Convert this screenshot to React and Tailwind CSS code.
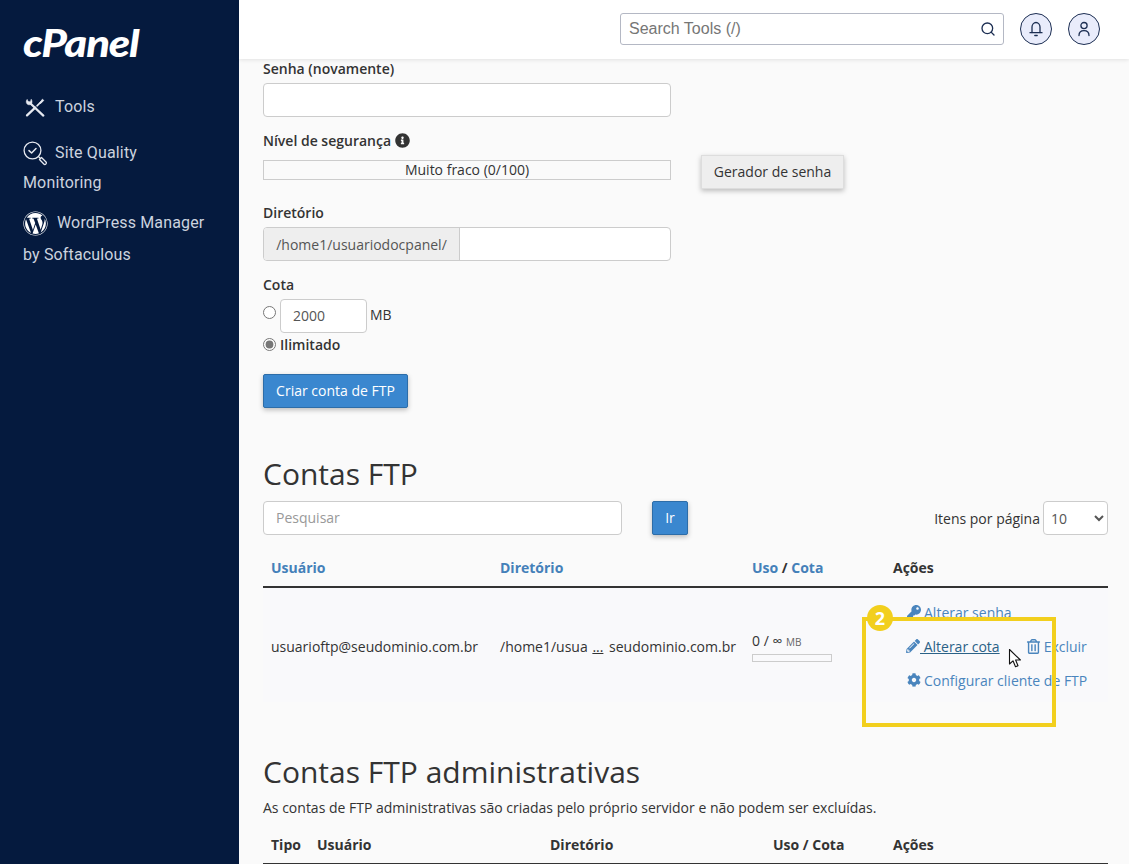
import React from 'react';
import { Search } from 'lucide-react';
import { FaKey, FaPencilAlt, FaRegTrashAlt, FaCog, FaInfoCircle, FaWordpress } from 'react-icons/fa';

function ToolsIcon() {
  return (
    <svg width="20" height="19" viewBox="0 0 20 19" fill="none" stroke="#e6e9f0" strokeLinecap="round" strokeLinejoin="round">
      <path d="M6 6 L18.3 17.6" strokeWidth="2.2" />
      <path d="M2 1.6 C0.7 3 1 5.4 2.6 6.4 C4 7.2 5.8 6.8 6.6 5.6 C7.3 4.4 7.2 2.6 6.2 1.2 L5.4 3.8 L3.4 3.6 Z" fill="#e6e9f0" strokeWidth="0.5" />
      <path d="M2 17.4 L10.2 9.6" strokeWidth="2.2" />
      <path d="M12 7.8 L15.8 4.2" strokeWidth="1.6" />
      <path d="M15 4.6 L17.4 1.2 L18.8 2.4 L15.8 5.4 Z" fill="#e6e9f0" strokeWidth="0.8" />
    </svg>
  );
}

function QualityIcon() {
  return (
    <svg width="24" height="25" viewBox="0 0 24 25" fill="none" stroke="#e6e9f0" strokeWidth="1.3" strokeLinecap="round" strokeLinejoin="round">
      <circle cx="9.5" cy="9.5" r="8.4" />
      <path d="M6 9.6 L8.6 12 L13 7.5" strokeWidth="1.5" />
      <path d="M15.6 15.6 L17 17" />
      <path d="M16.5 18.5 L18.5 16.5 L23 21 C23.6 21.8 23.4 22.5 22.8 23.1 C22.2 23.7 21.4 23.7 20.8 23 Z" />
    </svg>
  );
}

function BellIcon() {
  return (
    <svg width="14" height="16" viewBox="0 0 14 16" fill="none" stroke="#1c2e52" strokeWidth="1.3" strokeLinecap="round" strokeLinejoin="round">
      <path d="M3 11.5 V6 C3 3.5 4.8 1.5 7 1.5 C9.2 1.5 11 3.5 11 6 V11.5" />
      <path d="M1 11.7 H13" />
      <path d="M5.8 14.5 H8.2" />
    </svg>
  );
}

function UserIcon() {
  return (
    <svg width="14" height="16" viewBox="0 0 14 16" fill="none" stroke="#1c2e52" strokeWidth="1.3" strokeLinecap="round" strokeLinejoin="round">
      <circle cx="7" cy="4.6" r="3.1" />
      <path d="M2 14.5 C2 11.2 4 9.6 7 9.6 C10 9.6 12 11.2 12 14.5" />
    </svg>
  );
}

function Cursor() {
  return (
    <svg className="absolute left-[1008px] top-[648px]" width="14" height="21" viewBox="0 0 14 21">
      <path d="M1.5 1.5 L1.5 16 L5 12.8 L7.5 18.8 L10 17.7 L7.6 12 L12.4 12 Z" fill="#fff" stroke="#111" strokeWidth="1.1" strokeLinejoin="round" />
    </svg>
  );
}

function Sidebar() {
  return (
    <aside className="w-[239px] shrink-0 bg-[#051a3e] pl-[23px] pr-3 pt-[25px] font-['Roboto',sans-serif] text-[16px] tracking-[0.15px] text-[#ccd3df]">
      <div className="h-[36px] origin-left scale-x-[1.18] text-[37px] leading-[36px] font-black italic tracking-[-1px] text-white font-['Lato',sans-serif]">cPanel</div>
      <div className="mt-[34px] flex h-[24px] items-center gap-[10px] pl-[2px]">
        <ToolsIcon />
        <span>Tools</span>
      </div>
      <div className="mt-[21px] flex h-[26px] items-center gap-[8px]">
        <QualityIcon />
        <span>Site Quality</span>
      </div>
      <div className="mt-[5px] leading-[24px]">Monitoring</div>
      <div className="mt-[14px] flex h-[28px] items-center gap-[9px]">
        <FaWordpress className="text-[25px] text-white" />
        <span>WordPress Manager</span>
      </div>
      <div className="mt-[6px] leading-[24px]">by Softaculous</div>
    </aside>
  );
}

function Header() {
  return (
    <header className="relative z-10 flex h-[59px] shrink-0 items-start bg-white pl-[381px] pt-[13px] shadow-[0_1px_4px_rgba(0,0,0,0.1)]">
      <div className="flex h-[32px] w-[384px] items-center justify-between rounded-[3px] border border-[#b4b8c4] pl-[8px] pr-[7px]">
        <span className="font-['Liberation_Sans',sans-serif] text-[16px] text-[#767676]">Search Tools (/)</span>
        <Search size={16} strokeWidth={2} className="text-[#1c2e52]" />
      </div>
      <div className="ml-[16px] flex h-[32px] w-[32px] items-center justify-center rounded-full border border-[#1c2e52] bg-[#e9ecfb]">
        <BellIcon />
      </div>
      <div className="ml-[16px] flex h-[32px] w-[32px] items-center justify-center rounded-full border border-[#1c2e52] bg-[#e9ecfb]">
        <UserIcon />
      </div>
    </header>
  );
}

function PasswordForm() {
  return (
    <div className="w-[408px]">
      <label className="block h-[20px] font-semibold leading-[20px]">Senha (novamente)</label>
      <div className="mt-[4px] h-[34px] rounded-[4px] border border-[#ccc] bg-white" />

      <label className="mt-[14px] flex h-[20px] items-center gap-[4px] font-semibold leading-[20px]">
        Nível de segurança <FaInfoCircle className="mb-[2px] text-[15px] text-[#333]" />
      </label>
      <div className="relative mt-[9px] h-[20px] border border-[#ccc] text-center leading-[18px]">
        Muito fraco (0/100)
        <button className="absolute left-[437px] top-[-6px] h-[34px] w-[143px] whitespace-nowrap border border-[#ddd] bg-[#eee] text-[#333] shadow-[0_2px_5px_rgba(0,0,0,0.25)]">
          Gerador de senha
        </button>
      </div>

      <label className="mt-[23px] block h-[20px] font-semibold leading-[20px]">Diretório</label>
      <div className="mt-[4px] flex h-[34px] rounded-[4px] border border-[#ccc] bg-white">
        <span className="flex w-[196px] items-center justify-center rounded-l-[3px] border-r border-[#ccc] bg-[#eee] text-[#555]">/home1/usuariodocpanel/</span>
      </div>

      <label className="mt-[14px] block h-[20px] font-semibold leading-[20px]">Cota</label>
      <div className="mt-[4px] flex h-[34px] items-start">
        <input type="radio" name="quota" className="mt-[7px] h-[13px] w-[13px] accent-[#777]" />
        <div className="ml-[4px] flex h-[34px] w-[87px] items-center rounded-[4px] border border-[#ccc] bg-white pb-[2px] pl-[12px] text-[#555]">2000</div>
        <span className="ml-[3px] mt-[6px] leading-[20px]">MB</span>
      </div>
      <div className="mt-[1px] flex h-[20px] items-center gap-[4px]">
        <input type="radio" name="quota" defaultChecked className="h-[13px] w-[13px] accent-[#777]" />
        <span className="font-semibold">Ilimitado</span>
      </div>
      <button className="mt-[20px] h-[34px] w-[145px] rounded-[2px] border border-[#2d6da8] bg-[#3a87cf] pb-[2px] text-white shadow-[0_2px_5px_rgba(0,0,0,0.25)]">
        Criar conta de FTP
      </button>
    </div>
  );
}

function FtpAccounts() {
  return (
    <section>
      <h2 className="mt-[46px] h-[40px] text-[30px] leading-[40px] text-[#333]">Contas FTP</h2>
      <div className="mt-[7px] flex h-[34px] items-center">
        <div className="flex h-[34px] w-[359px] items-center rounded-[4px] border border-[#ccc] bg-white pb-[2px] pl-[12px] text-[#999]">Pesquisar</div>
        <button className="ml-[30px] h-[34px] w-[36px] rounded-[2px] border border-[#2d6da8] bg-[#3a87cf] pb-[2px] text-white shadow-[0_2px_5px_rgba(0,0,0,0.25)]">Ir</button>
        <span className="ml-auto">Itens por página</span>
        <select className="ml-[3px] h-[34px] w-[65px] rounded-[4px] border border-[#ccc] bg-white pl-[3px] text-[#555]">
          <option>10</option>
        </select>
      </div>
      <div className="mt-[16px] grid h-[37px] grid-cols-[229px_252px_141px_1fr] items-center border-b-2 border-[#333] px-[8px] pb-[3px] font-bold">
        <span className="text-[#4480b9]">Usuário</span>
        <span className="text-[#4480b9]">Diretório</span>
        <span><span className="text-[#4480b9]">Uso</span> / <span className="text-[#4480b9]">Cota</span></span>
        <span>Ações</span>
      </div>
      <div className="grid h-[114px] grid-cols-[229px_252px_141px_1fr] bg-[#f9f9fb] px-[8px] text-[#333]">
        <span className="mt-[49px] leading-[20px]">usuarioftp@seudominio.com.br</span>
        <span className="mt-[49px] whitespace-nowrap leading-[20px]">/home1/usua <span className="ml-[1px] mr-[2px] underline">...</span> seudominio.com.br</span>
        <div className="mt-[43px]">
          <div className="leading-[20px]">0 / ∞ <span className="text-[10px] text-[#666]">MB</span></div>
          <div className="mt-[2px] h-[8px] w-[80px] border border-[#ccc]" />
        </div>
        <div className="mt-[14px] pl-[14px] text-[#4a85bd]">
          <div className="flex h-[20px] items-center gap-[3px]"><FaKey className="text-[14px]" /> Alterar senha</div>
          <div className="mt-[14px] flex h-[20px] items-center">
            <FaPencilAlt className="ml-[-1px] text-[14px]" />
            <span className="whitespace-pre text-[#2b6287] underline"> Alterar cota</span>
            <FaRegTrashAlt className="ml-[26px] text-[15px]" />
            <span className="ml-[3px]">Excluir</span>
          </div>
          <div className="mt-[14px] flex h-[20px] items-center gap-[3px] whitespace-nowrap"><FaCog className="text-[14px]" /> Configurar cliente de FTP</div>
        </div>
      </div>
    </section>
  );
}

function AdminAccounts() {
  return (
    <section>
      <h2 className="mt-[50px] h-[40px] text-[30px] leading-[40px] text-[#333]">Contas FTP administrativas</h2>
      <p className="mt-[6px] h-[20px] leading-[20px]">As contas de FTP administrativas são criadas pelo próprio servidor e não podem ser excluídas.</p>
      <div className="mt-[17px] grid grid-cols-[46px_233px_223px_120px_1fr] border-b-2 border-[#333] px-[8px] pb-[8px] font-bold leading-[20px]">
        <span>Tipo</span>
        <span>Usuário</span>
        <span>Diretório</span>
        <span>Uso / Cota</span>
        <span>Ações</span>
      </div>
    </section>
  );
}

export default function App() {
  return (
    <div className="relative flex h-[864px] w-[1129px] overflow-hidden bg-[#fafafa] font-['Open_Sans',sans-serif] text-[14px] text-[#333]">
      <Sidebar />
      <div className="flex min-w-0 flex-1 flex-col">
        <Header />
        <main className="pl-[24px] pr-[21px]">
          <PasswordForm />
          <FtpAccounts />
          <AdminAccounts />
        </main>
      </div>

      {/* callout over the actions column */}
      <div className="absolute left-[862px] top-[617px] h-[110px] w-[194px] border-4 border-[#f2cf1d]" />
      <div className="absolute left-[867px] top-[605px] flex h-[26px] w-[26px] items-center justify-center rounded-full bg-[#f2cf1d] text-[18px] font-bold text-white">2</div>
      <Cursor />
    </div>
  );
}
